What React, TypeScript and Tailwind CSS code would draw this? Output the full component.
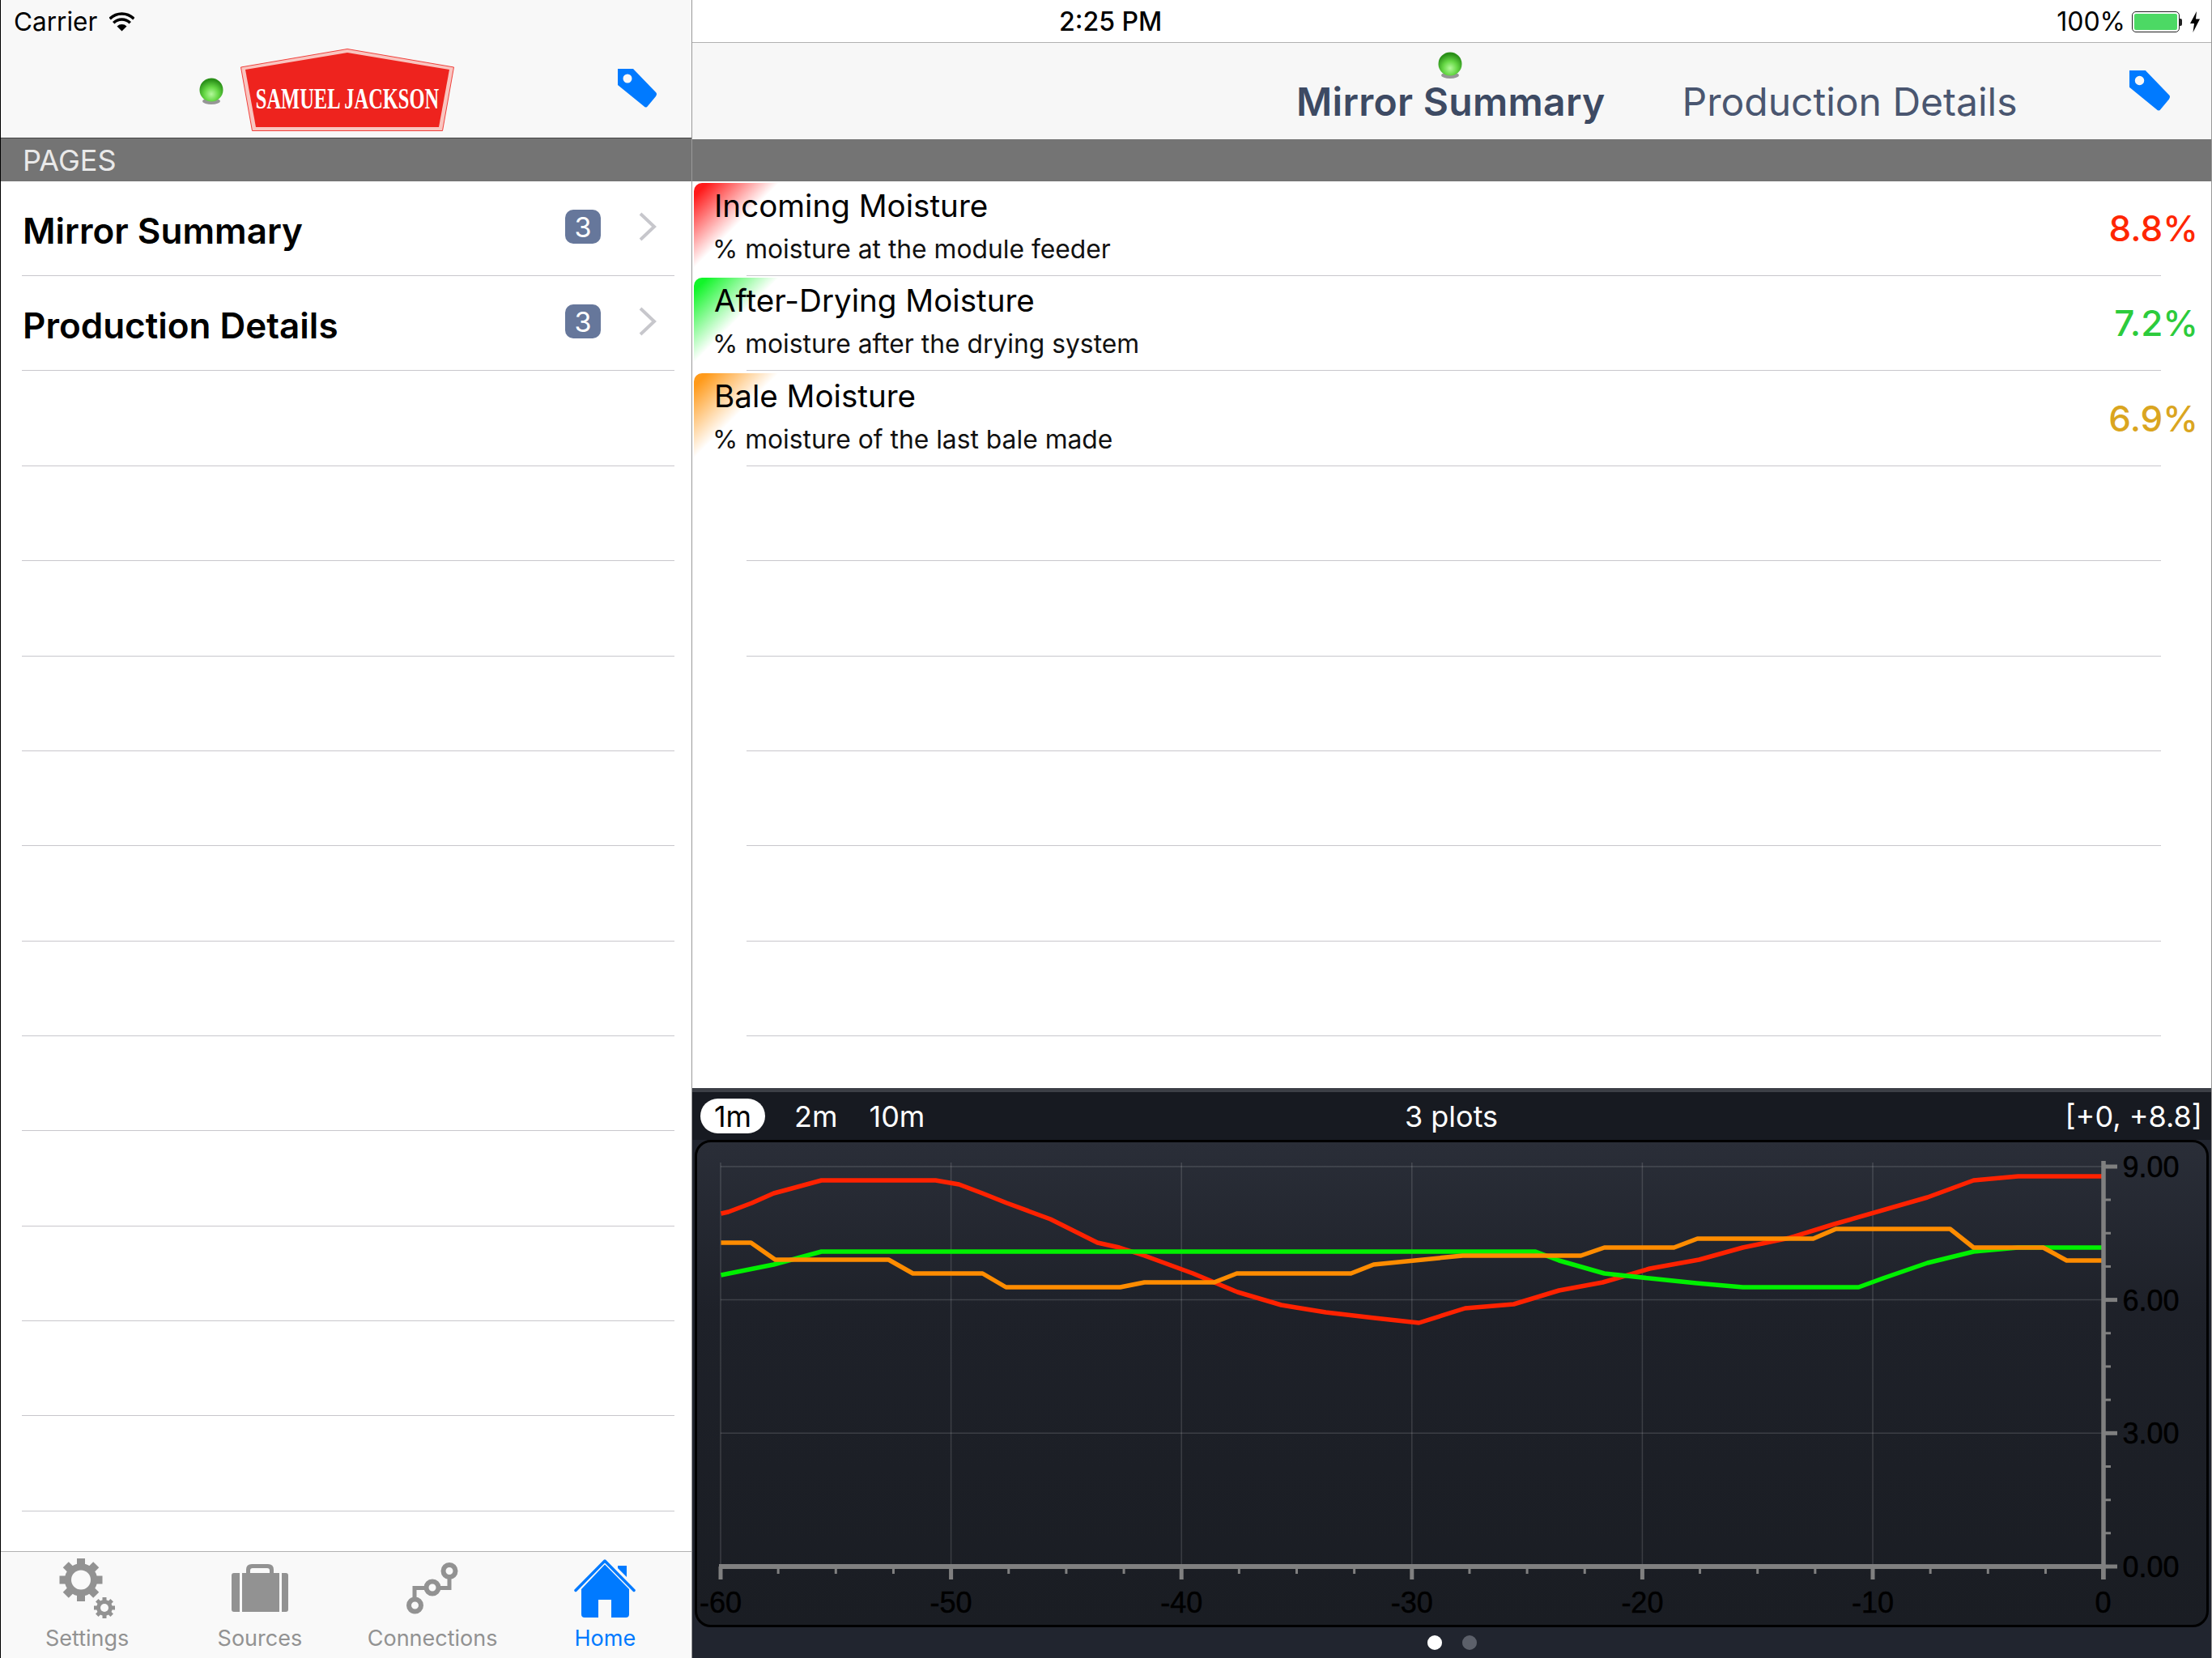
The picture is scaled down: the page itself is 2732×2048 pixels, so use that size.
const leftRows = [
  { name: 'Mirror Summary', count: 3 },
  { name: 'Production Details', count: 3 },
]

const measures = [
  { title: 'Incoming Moisture', sub: '% moisture at the module feeder', value: '8.8%', valueClass: 'text-[#ff2600]', cornerClass: 'bg-[linear-gradient(135deg,#ff1a1a_0%,#ff1a1a_8%,#ffffff00_50%)]' },
  { title: 'After-Drying Moisture', sub: '% moisture after the drying system', value: '7.2%', valueClass: 'text-[#2ccb3c]', cornerClass: 'bg-[linear-gradient(135deg,#12f52a_0%,#12f52a_8%,#ffffff00_50%)]' },
  { title: 'Bale Moisture', sub: '% moisture of the last bale made', value: '6.9%', valueClass: 'text-[#daa520]', cornerClass: 'bg-[linear-gradient(135deg,#ff9a1a_0%,#ff9a1a_8%,#ffffff00_50%)]' },
]

const redLine = '891,1499 900,1497 929,1486 956,1474 971,1470 1015,1458 1156,1458 1185,1463 1214,1474 1244,1486 1298,1506 1356,1535 1383,1541 1414,1551 1474,1573 1529,1596 1583,1612 1601,1615 1638,1621 1698,1628 1753,1634 1810,1616 1870,1611 1926,1594 1980,1584 2038,1567 2099,1556 2153,1541 2211,1529 2266,1512 2381,1479 2438,1458 2493,1453 2598,1453'
const greenLine = '891,1575 956,1562 1015,1546 1897,1546 1926,1557 1982,1573 2038,1579 2096,1585 2153,1590 2296,1590 2326,1579 2381,1560 2438,1546 2493,1541 2598,1541'
const orangeLine = '891,1535 928,1535 958,1556 1098,1556 1128,1573 1214,1573 1243,1590 1384,1590 1414,1584 1500,1584 1528,1573 1669,1573 1697,1562 1807,1551 1953,1551 1982,1541 2068,1541 2097,1530 2240,1530 2268,1518 2409,1518 2438,1541 2524,1541 2553,1557 2598,1557'

const xLabels = [-60, -50, -40, -30, -20, -10, 0]
const xStep = 284.6
const axisLeft = 890.5
const axisRight = 2598.5
const yZero = 1935
const yUnit = 164.7

function GreenBall({ className }: { className: string }) {
  return (
    <svg viewBox="0 0 30 34" className={className}>
      <defs>
        <radialGradient id="ball" cx="50%" cy="68%" r="60%">
          <stop offset="0%" stopColor="#b4f89c" />
          <stop offset="50%" stopColor="#66d845" />
          <stop offset="100%" stopColor="#2a9018" />
        </radialGradient>
      </defs>
      <ellipse cx="15" cy="29" rx="11" ry="4" fill="#555" opacity="0.6" />
      <circle cx="15" cy="15" r="14.500" fill="url(#ball)" />
    </svg>
  )
}

function TagIcon({ className }: { className: string }) {
  return (
    <svg viewBox="0 0 48 48" className={className}>
      <path
        fillRule="evenodd"
        fill="#007aff"
        d="M0 0H19L47 29Q49 31 47 34L37 46Q35 49 32 46L0 20ZM12 6.500A5.500 5.500 0 1 0 12.010 17.500A5.500 5.500 0 1 0 12 6.500Z"
      />
    </svg>
  )
}

function Logo() {
  return (
    <svg viewBox="0 0 264 103" className="w-[264px] h-[103px]">
      <polygon points="132,0.500 263.500,23 249.500,101.500 14.500,101.500 0.500,23" fill="#f9c5c0" stroke="#f0413c" strokeWidth="1" />
      <polygon points="132,5 258,26 245,97 19,97 6,26" fill="#ee231e" />
      <text transform="translate(132 74) scale(0.68 1)" textAnchor="middle" fontFamily="'Liberation Serif', serif" fontWeight="700" fontSize="36" fill="#fff">
        SAMUEL JACKSON
      </text>
    </svg>
  )
}

function Gear({ cx, cy, r, hole, tooth }: { cx: number; cy: number; r: number; hole: number; tooth: number }) {
  const body = r * 0.76
  return (
    <g fill="#929292">
      {[0, 45, 90, 135, 180, 225, 270, 315].map((a) => (
        <rect key={a} x={cx - tooth / 2} y={cy - r} width={tooth} height={r} transform={`rotate(${a} ${cx} ${cy})`} />
      ))}
      <circle cx={cx} cy={cy} r={(body + hole) / 2} fill="none" stroke="#929292" strokeWidth={body - hole} />
      <circle cx={cx} cy={cy} r={hole} fill="#f9f9f9" />
    </g>
  )
}

function SettingsIcon() {
  return (
    <svg viewBox="0 0 70 74" className="w-[70px] h-[74px]">
      <Gear cx={27} cy={26.500} r={26.500} hole={12} tooth={10} />
      <Gear cx={56} cy={61} r={13} hole={5} tooth={5} />
    </svg>
  )
}

function SourcesIcon() {
  return (
    <svg viewBox="0 0 70 60" className="w-[70px] h-[60px]" fill="#929292">
      <path d="M10 11V59H3Q0 59 0 56V14Q0 11 3 11Z" />
      <rect x="13" y="11" width="46" height="48" />
      <path d="M62 11H67Q70 11 70 14V56Q70 59 67 59H62Z" />
      <path d="M18 11V7Q18 0 25 0H45Q52 0 52 7V11H47V8Q47 5 44 5H26Q23 5 23 8V11Z" />
    </svg>
  )
}

function ConnectionsIcon() {
  return (
    <svg viewBox="0 0 64 64" className="w-[64px] h-[64px]" fill="none" stroke="#929292">
      <path d="M10 43V31.500H53V10" strokeWidth="5" />
      <circle cx="10.500" cy="53" r="7.500" strokeWidth="6" fill="#f9f9f9" />
      <circle cx="32" cy="31" r="7.500" strokeWidth="6" fill="#f9f9f9" />
      <circle cx="53" cy="10.500" r="7.500" strokeWidth="6" fill="#f9f9f9" />
    </svg>
  )
}

function HomeIcon() {
  return (
    <svg viewBox="0 0 76 72" className="w-[76px] h-[72px]" fill="#007aff">
      <path d="M2 38.500L38 2L74 38.500" fill="none" stroke="#007aff" strokeWidth="3.500" strokeLinecap="round" strokeLinejoin="round" />
      <path d="M54 8H65V22L54 11Z" />
      <path fillRule="evenodd" d="M38 6.500L68 37V68Q68 72 64 72H13Q9 72 9 68V37ZM30 50V72H46V50Z" />
    </svg>
  )
}

function Chart() {
  return (
    <svg viewBox="862 1411 1863 596" className="w-full h-full block">
      {/* grid */}
      {[9, 6, 3].map((v) => (
        <line key={v} x1={axisLeft} x2={axisRight} y1={yZero - (v / 3) * yUnit} y2={yZero - (v / 3) * yUnit} stroke="#ffffff" strokeOpacity="0.14" strokeWidth="1.500" />
      ))}
      {xLabels.slice(0, 6).map((_, i) => (
        <line key={i} x1={axisLeft + i * xStep} x2={axisLeft + i * xStep} y1={1436} y2={yZero} stroke="#ffffff" strokeOpacity="0.14" strokeWidth="1.500" />
      ))}

      {/* lines */}
      <polyline points={redLine} fill="none" stroke="#ff2200" strokeWidth="5.500" strokeLinejoin="round" />
      <polyline points={greenLine} fill="none" stroke="#00f000" strokeWidth="5.500" strokeLinejoin="round" />
      <polyline points={orangeLine} fill="none" stroke="#ff8c00" strokeWidth="5.500" strokeLinejoin="round" />

      {/* x axis */}
      <line x1={axisLeft - 2} x2={axisRight + 2} y1={yZero} y2={yZero} stroke="#808080" strokeWidth="6" />
      {Array.from({ length: 25 }).map((_, i) => (
        <line
          key={i}
          x1={axisLeft + (i * xStep) / 4}
          x2={axisLeft + (i * xStep) / 4}
          y1={yZero}
          y2={i % 4 === 0 ? yZero + 16 : yZero + 9}
          stroke="#808080"
          strokeWidth={i % 4 === 0 ? 5 : 3}
        />
      ))}

      {/* y axis */}
      <line x1={axisRight} x2={axisRight} y1={1434} y2={yZero + 16} stroke="#808080" strokeWidth="5.500" />
      {Array.from({ length: 13 }).map((_, i) => (
        <line
          key={i}
          x1={axisRight}
          x2={i % 4 === 0 ? axisRight + 17 : axisRight + 9}
          y1={yZero - (i * yUnit) / 4}
          y2={yZero - (i * yUnit) / 4}
          stroke="#808080"
          strokeWidth={i % 4 === 0 ? 5 : 3}
        />
      ))}

      {/* labels */}
      <g fontFamily="'Liberation Sans', sans-serif" fontSize="36" fill="#000" stroke="#000" strokeWidth="0.500">
        {xLabels.map((v, i) => (
          <text key={v} x={axisLeft + i * xStep} y={1992} textAnchor="middle">
            {v}
          </text>
        ))}
        {['0.00', '3.00', '6.00', '9.00'].map((v, i) => (
          <text key={v} x={2622} y={yZero - i * yUnit + 13}>
            {v}
          </text>
        ))}
      </g>
    </svg>
  )
}

export default function App() {
  return (
    <div className="flex w-[2732px] h-[2048px] overflow-hidden bg-white font-[Inter,sans-serif]">

      {/* Left: pages */}
      <div className="flex flex-col w-[855px] shrink-0 border-l border-l-black border-r border-r-[#9a9a9a]">
        <div className="h-[171px] bg-[#f8f8f8] border-b border-[#444]">
          <div className="flex items-center h-[52px] pt-[2px] pl-[16px] gap-[15px]">
            <span className="text-[31.500px] text-black">Carrier</span>
            <svg viewBox="0 0 31 25" className="w-[31px] h-[25px] mb-[2px]" fill="none" stroke="#000" strokeWidth="3.500">
              <path d="M0.650 9.150A21 21 0 0 1 30.350 9.150" />
              <path d="M5.250 14.250A14.500 14.500 0 0 1 25.750 14.250" />
              <path d="M15.500 24.500L9.500 18.500A8.500 8.500 0 0 1 21.500 18.500Z" fill="#000" stroke="none" />
            </svg>
          </div>
          <div className="flex items-center h-[118px] pl-[245px]">
            <GreenBall className="w-[30px] h-[34px] mt-[3px]" />
            <div className="ml-[21px]">
              <Logo />
            </div>
            <div className="ml-auto mr-[43px] mb-[4px]">
              <TagIcon className="w-[48px] h-[48px]" />
            </div>
          </div>
        </div>

        <div className="flex items-center h-[53px] pl-[27px] bg-[#747474] text-[36px] text-[#e9e9e9]">PAGES</div>

        <div className="flex-1 overflow-hidden bg-white">
          {leftRows.map((row) => (
            <div key={row.name} className="h-[117.33px]">
              <div className="flex items-center h-[116px] pl-[27px]">
                <span className="pt-[6px] text-[44px] font-semibold text-black">{row.name}</span>
                <div className="flex items-center ml-auto mr-[43px] mb-[4px]">
                  <span className="flex items-center justify-center w-[44px] h-[42px] rounded-[10px] bg-[#66779b] text-[34px] text-white">{row.count}</span>
                  <svg viewBox="0 0 22 36" className="w-[22px] h-[36px] ml-[47px]" fill="none" stroke="#c7c7cc" strokeWidth="4">
                    <path d="M2 2L19 18L2 34" />
                  </svg>
                </div>
              </div>
              <div className="h-px mx-[26px] mr-[21px] bg-[#c8c7cc]" />
            </div>
          ))}
          {Array.from({ length: 12 }).map((_, i) => (
            <div key={i} className="flex flex-col justify-end h-[117.33px]">
              <div className="h-px mx-[26px] mr-[21px] bg-[#c8c7cc]" />
            </div>
          ))}
        </div>

        <div className="grid grid-cols-4 h-[132px] bg-[#f9f9f9] border-t border-[#b2b2b2]">
          {[
            { label: 'Settings', icon: <SettingsIcon /> },
            { label: 'Sources', icon: <SourcesIcon /> },
            { label: 'Connections', icon: <ConnectionsIcon /> },
            { label: 'Home', icon: <HomeIcon />, active: true },
          ].map((tab) => (
            <div key={tab.label} className="flex flex-col items-center pt-[3px]">
              <div className="flex items-center justify-center h-[84px]">{tab.icon}</div>
              <span className={`mt-[4px] text-[27px] leading-[32px] ${tab.active ? 'text-[#007aff]' : 'text-[#929292]'}`}>{tab.label}</span>
            </div>
          ))}
        </div>
      </div>

      {/* Right: detail */}
      <div className="flex flex-col flex-1 min-w-0 border-r border-[#999]">
        <div className="relative flex items-center justify-end h-[53px] pt-[2px] pr-[13px] bg-white border-b border-[#b2b2b2]">
          <span className="absolute left-[453px] text-[32px] font-medium text-black">2:25 PM</span>
          <span className="text-[32px] text-black">100%</span>
          <div className="flex items-center ml-[8px]">
            <div className="w-[59px] h-[26px] p-[2px] rounded-[5px] border-[1.500px] border-[#222]">
              <div className="w-full h-full rounded-[2px] bg-[#4cd964]" />
            </div>
            <div className="w-[3px] h-[9px] rounded-r-[2px] bg-[#222]" />
          </div>
          <svg viewBox="0 0 14 26" className="w-[14px] h-[26px] ml-[9px]" fill="#000">
            <path d="M9 0L1 15H6L4.500 26L13 9.500H8Z" />
          </svg>
        </div>

        <div className="flex items-center h-[119px] pl-[746px] bg-[#f7f7f7]">
          <div className="relative pt-[27px]">
            <GreenBall className="absolute top-[1px] left-[175px] w-[30px] h-[34px]" />
            <span className="text-[48px] tracking-[0.3px] font-semibold text-[#3d4a63]">Mirror Summary</span>
          </div>
          <span className="ml-[95px] pt-[27px] text-[48px] text-[#4a5670]">Production Details</span>
          <div className="ml-auto mr-[51px] mb-[2px]">
            <TagIcon className="w-[50px] h-[50px]" />
          </div>
        </div>

        <div className="h-[52px] bg-[#747474]" />

        <div className="flex-1 overflow-hidden bg-white">
          {measures.map((m) => (
            <div key={m.title} className="relative h-[117.33px]">
              <div className={`absolute left-[2px] top-[2px] w-[106px] h-[104px] rounded-tl-[10px] ${m.cornerClass}`} />
              <div className="relative flex justify-between h-[116px] pl-[27px] pr-[16px]">
                <div className="pt-[6px]">
                  <div className="text-[38.600px] leading-[48px] text-black">{m.title}</div>
                  <div className="mt-[12px] -ml-[2px] text-[31.800px] leading-[36px] text-[#111]">{m.sub}</div>
                </div>
                <div className={`self-center text-[44px] font-medium ${m.valueClass}`}>{m.value}</div>
              </div>
              <div className="h-px ml-[67px] mr-[62px] bg-[#c8c7cc]" />
            </div>
          ))}
          {Array.from({ length: 6 }).map((_, i) => (
            <div key={i} className="flex flex-col justify-end h-[117.33px]">
              <div className="h-px ml-[67px] mr-[62px] bg-[#c8c7cc]" />
            </div>
          ))}
        </div>

        {/* Plot panel */}
        <div className="flex flex-col h-[704px] bg-[#21252f] border-t-[5px] border-[#3c3f46]">
          <div className="grid grid-cols-3 items-center h-[59px] pl-[10px] pr-[11px] bg-[#171a21] text-[36px] text-white">
            <div className="flex items-center">
              <span className="flex items-center justify-center w-[80px] h-[43px] rounded-full bg-white text-black">1m</span>
              <span className="ml-[36px]">2m</span>
              <span className="ml-[39px]">10m</span>
            </div>
            <span className="text-center">3 plots</span>
            <span className="text-right">[+0, +8.8]</span>
          </div>
          <div className="h-[602px] mx-[3px] rounded-[20px] border-[3px] border-black bg-[linear-gradient(#2a2e38_0%,#1e2129_35%,#1a1d23_100%)] overflow-hidden">
            <Chart />
          </div>
          <div className="flex flex-1 items-center justify-center gap-[25px]">
            <div className="w-[18px] h-[18px] rounded-full bg-white" />
            <div className="w-[18px] h-[18px] rounded-full bg-[#5c606a]" />
          </div>
        </div>
      </div>
    </div>
  )
}
